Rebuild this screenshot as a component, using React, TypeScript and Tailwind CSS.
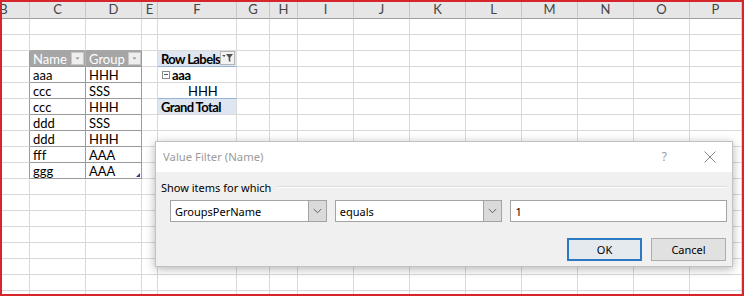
import React from "react";

const letters = ["B", "C", "D", "E", "F", "G", "H", "I", "J", "K", "L", "M", "N", "O", "P"];
const NROWS = 18;

const tableData: [string, string][] = [
  ["aaa", "HHH"],
  ["ccc", "SSS"],
  ["ccc", "HHH"],
  ["ddd", "SSS"],
  ["ddd", "HHH"],
  ["fff", "AAA"],
  ["ggg", "AAA"],
];

function SmallArrowBtn({ left }: { left: string }) {
  return (
    <div className={`absolute ${left} top-[1px] w-[13px] h-[13px] bg-[#eeeeee] border border-[#c8c8c8] flex items-center justify-center`}>
      <svg width="7" height="5" viewBox="0 0 7 5">
        <path d="M1.5 1.5 L5.5 1.5 L3.5 3.5 Z" fill="#8a8a8a" />
      </svg>
    </div>
  );
}

function FilterBtn() {
  return (
    <div className="absolute right-[1px] top-[0px] w-[15px] h-[14px] bg-[#f2f2f2] border border-[#b5b5b5] flex items-center justify-center">
      <svg width="13" height="10" viewBox="0 0 13 10">
        <path d="M1 2 L4.5 2 L3.3 4 Z" fill="#505050" />
        <path d="M5 1 L12 1 L9.3 4.5 L9.3 9 L7.7 8 L7.7 4.5 Z" fill="#505050" />
      </svg>
    </div>
  );
}

const txt = "absolute top-[0px] leading-[16px] text-black";
const boldTxt = "absolute top-[0px] leading-[16px] text-black font-bold text-[13px] tracking-[-0.6px]";

function Cell({ r, c }: { r: number; c: number }) {
  let cls = "relative border-r border-b border-[#d9d9d9] overflow-visible";
  let content: React.ReactNode = null;

  if (c === 0 && r >= 2 && r <= 9) {
    cls = "relative border-b border-[#d9d9d9] border-r border-r-[#9a9a9a]";
  }
  if ((c === 1 || c === 2) && r === 1) {
    cls = "relative border-r border-[#d9d9d9] border-b border-b-[#a6a6a6]";
  }
  if ((c === 1 || c === 2) && r === 2) {
    cls = "relative bg-[#a6a6a6] border-b border-[#9a9a9a] border-r " + (c === 1 ? "border-r-[#b4b4b4]" : "border-r-[#9a9a9a]");
    content = (
      <>
        <span className="absolute left-[3px] top-[0px] text-white leading-[16px]">{c === 1 ? "Name" : "Group"}</span>
        <SmallArrowBtn left={c === 1 ? "left-[41px]" : "left-[42px]"} />
      </>
    );
  }
  if ((c === 1 || c === 2) && r >= 3 && r <= 9) {
    cls = "relative border-r border-b border-[#9a9a9a]";
    content = <span className={`${txt} left-[3px]`}>{tableData[r - 3][c - 1]}</span>;
    if (c === 2 && r === 9) {
      content = (
        <>
          {content}
          <svg className="absolute right-[1px] bottom-[1px]" width="4" height="4" viewBox="0 0 4 4">
            <path d="M4 0 L4 4 L0 4 Z" fill="#2f3f8f" />
          </svg>
        </>
      );
    }
  }

  if (c === 4 && r === 2) {
    cls = "relative bg-[#dde6f1] border-r border-[#d9d9d9] border-b border-b-[#95b3d7]";
    content = (
      <>
        <span className={`${boldTxt} left-[3px]`}>Row Labels</span>
        <FilterBtn />
      </>
    );
  }
  if (c === 4 && r === 3) {
    content = (
      <div className="absolute left-[4px] top-0 h-[15px] flex items-center gap-[2px]">
        <div className="w-[8px] h-[8px] border border-[#8a8a8a] bg-white flex items-center justify-center">
          <div className="w-[4px] h-[1px] bg-[#555]" />
        </div>
        <span className="font-bold text-black leading-[16px] text-[13px] tracking-[-0.4px]">aaa</span>
      </div>
    );
  }
  if (c === 4 && r === 4) {
    cls = "relative border-r border-[#d9d9d9] border-b border-b-[#95b3d7]";
    content = <span className={`${txt} left-[30px]`}>HHH</span>;
  }
  if (c === 4 && r === 5) {
    cls = "relative bg-[#dde6f1] border-r border-b border-[#d9d9d9]";
    content = <span className={`${boldTxt} left-[3px]`}>Grand Total</span>;
  }

  return <div className={cls}>{content}</div>;
}

function Chevron() {
  return (
    <svg width="9" height="6" viewBox="0 0 9 6">
      <path d="M0.8 1 L4.5 4.7 L8.2 1" stroke="#606060" strokeWidth="1" fill="none" />
    </svg>
  );
}

function Combo({ width, text }: { width: string; text: string }) {
  return (
    <div className={`${width} h-[22px] bg-white border border-[#a3a3a3] flex items-stretch`}>
      <div className="flex-1 pl-[4px] flex items-center text-[11px] text-black leading-none">{text}</div>
      <div className="w-[18px] bg-[#dadada] border-l border-[#a3a3a3] flex items-center justify-center">
        <Chevron />
      </div>
    </div>
  );
}

function Dialog() {
  return (
    <div
      className="absolute left-[155px] top-[141px] w-[578px] h-[126px] bg-[#f0f0f0] border border-[#c2c2c2] shadow-[0_2px_9px_rgba(0,0,0,0.3)] flex flex-col"
      style={{ fontFamily: '"Noto Sans", "Open Sans", sans-serif' }}
    >
      <div className="h-[30px] bg-white flex items-center pl-[7px] pr-[16px]">
        <span className="text-[11.3px] text-[#9b9b9b] leading-none">Value Filter (Name)</span>
        <span className="ml-auto text-[12px] text-[#9b9b9b] leading-none mr-[37px]">?</span>
        <svg width="12" height="12" viewBox="0 0 12 12">
          <path d="M0.5 0.5 L11.5 11.5 M11.5 0.5 L0.5 11.5" stroke="#8a8a8a" strokeWidth="1" />
        </svg>
      </div>
      <div className="flex-1 flex flex-col pt-[8px] pl-[5px] pr-[5px]">
        <div className="h-[14px] flex items-center">
          <span className="text-[11px] text-black leading-none">Show items for which</span>
          <div className="flex-1 ml-[6px] h-[2px] border-t border-[#dcdcdc] border-b border-b-white" />
        </div>
        <div className="mt-[6px] flex pl-[9px] gap-[8px]">
          <Combo width="w-[157px]" text="GroupsPerName" />
          <Combo width="w-[168px]" text="equals" />
          <div className="w-[217px] h-[22px] bg-white border border-[#a3a3a3] pl-[4px] flex items-center text-[11px] text-black leading-none">
            1
          </div>
        </div>
        <div className="mt-[16px] flex justify-end gap-[9px] pr-[1px]">
          <div className="w-[75px] h-[23px] bg-[#e5eaef] border-2 border-[#2b79c3] flex items-center justify-center text-[11px] text-black leading-none">
            OK
          </div>
          <div className="w-[75px] h-[23px] bg-[#e1e1e1] border border-[#adadad] flex items-center justify-center text-[11px] text-black leading-none">
            Cancel
          </div>
        </div>
      </div>
    </div>
  );
}

export default function App() {
  return (
    <div className="relative w-[745px] h-[297px] bg-white overflow-hidden">
      <div
        className="w-[744px] h-[296px] border-2 border-[#d7262b] overflow-hidden"
        style={{ fontFamily: 'Lato, "Liberation Sans", Arial, sans-serif' }}
      >
        <div className="grid grid-cols-[28px_56px_56px_16px_79px_33px_28px_56px_56px_56px_56px_56px_56px_56px_52px] text-[13px]">
          {letters.map((l, i) => (
            <div
              key={l}
              className="h-[17px] bg-[#e6e6e6] border-r border-[#c6c6c6] border-b border-b-[#9e9e9e] flex items-center justify-center text-[13px] text-[#444]"
            >
              <span className={i === 0 ? "ml-[-24px]" : ""}>{l}</span>
            </div>
          ))}
          {Array.from({ length: NROWS }).map((_, r) =>
            letters.map((_, c) => (
              <div key={`${r}-${c}`} className="h-[16px] grid">
                <Cell r={r} c={c} />
              </div>
            ))
          )}
        </div>
      </div>
      <Dialog />
    </div>
  );
}
